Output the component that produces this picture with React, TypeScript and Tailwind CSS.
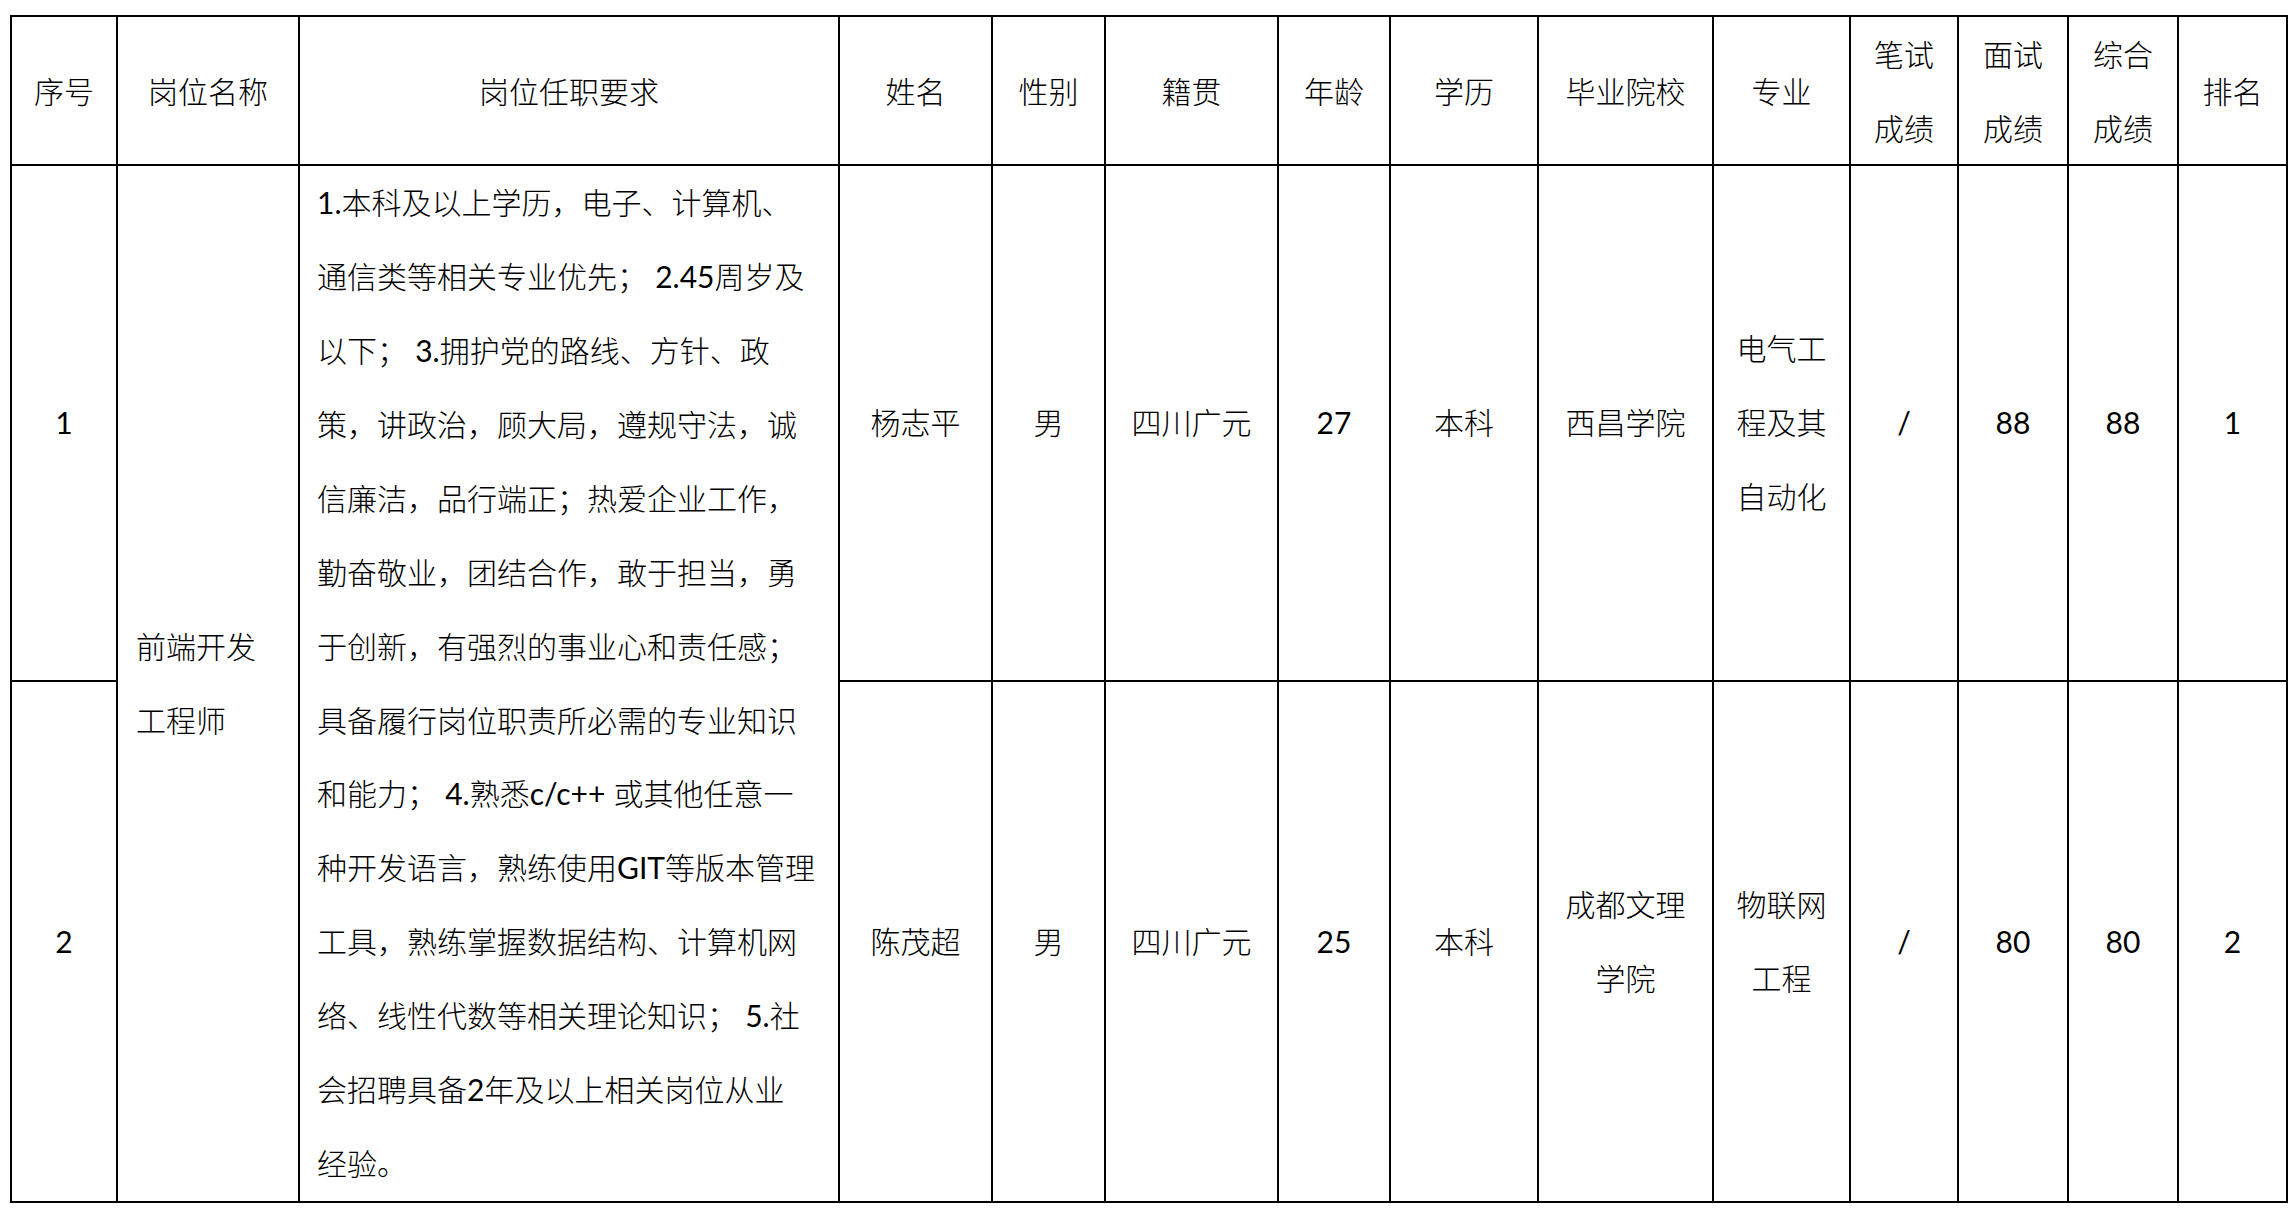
import React from "react";

const cell =
  "bg-white flex items-center justify-center text-center text-black leading-[73.9px]";

const headers: React.ReactNode[] = [
  "序号",
  "岗位名称",
  "岗位任职要求",
  "姓名",
  "性别",
  "籍贯",
  "年龄",
  "学历",
  "毕业院校",
  "专业",
  <>笔试<br />成绩</>,
  <>面试<br />成绩</>,
  <>综合<br />成绩</>,
  "排名",
];

const reqLines = [
  "1.本科及以上学历，电子、计算机、",
  "通信类等相关专业优先； 2.45周岁及",
  "以下； 3.拥护党的路线、方针、政",
  "策，讲政治，顾大局，遵规守法，诚",
  "信廉洁，品行端正；热爱企业工作，",
  "勤奋敬业，团结合作，敢于担当，勇",
  "于创新，有强烈的事业心和责任感；",
  "具备履行岗位职责所必需的专业知识",
  "和能力； 4.熟悉c/c++ 或其他任意一",
  "种开发语言，熟练使用GIT等版本管理",
  "工具，熟练掌握数据结构、计算机网",
  "络、线性代数等相关理论知识； 5.社",
  "会招聘具备2年及以上相关岗位从业",
  "经验。",
];

function Mixed({ text }: { text: string }) {
  const parts = text.split(/([\x21-\x7e]+)/);
  return (
    <>
      {parts.map((p, i) =>
        /^[\x21-\x7e]+$/.test(p) ? (
          <span key={i} className="font-normal">
            {p}
          </span>
        ) : (
          <span key={i}>{p}</span>
        )
      )}
    </>
  );
}

type Row = React.ReactNode[];

const row1: Row = [
  "杨志平",
  "男",
  "四川广元",
  "27",
  "本科",
  "西昌学院",
  <>电气工<br />程及其<br />自动化</>,
  "/",
  "88",
  "88",
  "1",
];

const row2: Row = [
  "陈茂超",
  "男",
  "四川广元",
  "25",
  "本科",
  <>成都文理<br />学院</>,
  <>物联网<br />工程</>,
  "/",
  "80",
  "80",
  "2",
];

function isLatin(c: React.ReactNode) {
  return typeof c === "string" && /^[\x21-\x7e]+$/.test(c);
}

export default function App() {
  return (
    <div className="min-h-[1209px] w-[2295px] bg-white pt-[15px] pl-[10px] font-['Lato','Noto_Sans_CJK_SC',sans-serif] text-[30px]">
      <div className="grid w-[2278px] grid-cols-[104px_180px_538px_151px_111px_171px_110px_146px_173px_135px_106px_108px_108px_107px] grid-rows-[147px_514px_519px] gap-[2px] bg-black p-[2px]">
        {headers.map((h, i) => (
          <div key={"h" + i} className={cell + " font-['Noto_Sans_CJK_SC',sans-serif] font-light"}>
            <div>{h}</div>
          </div>
        ))}

        <div className={cell + " font-normal"}>1</div>
        <div className="row-span-2 flex items-center bg-white pl-[18px] leading-[73.9px] text-black font-light">
          <div>
            前端开发
            <br />
            工程师
          </div>
        </div>
        <div className="row-span-2 flex items-center bg-white pl-[17px] leading-[73.9px] text-black font-light">
          <div>
            {reqLines.map((l, i) => (
              <div key={i} className="whitespace-pre">
                <Mixed text={l} />
              </div>
            ))}
          </div>
        </div>
        {row1.map((c, i) => (
          <div key={"a" + i} className={cell + (isLatin(c) ? " font-normal" : " font-light")}>
            <div>{c}</div>
          </div>
        ))}

        <div className={cell + " font-normal"}>2</div>
        {row2.map((c, i) => (
          <div key={"b" + i} className={cell + (isLatin(c) ? " font-normal" : " font-light")}>
            <div>{c}</div>
          </div>
        ))}
      </div>
    </div>
  );
}
